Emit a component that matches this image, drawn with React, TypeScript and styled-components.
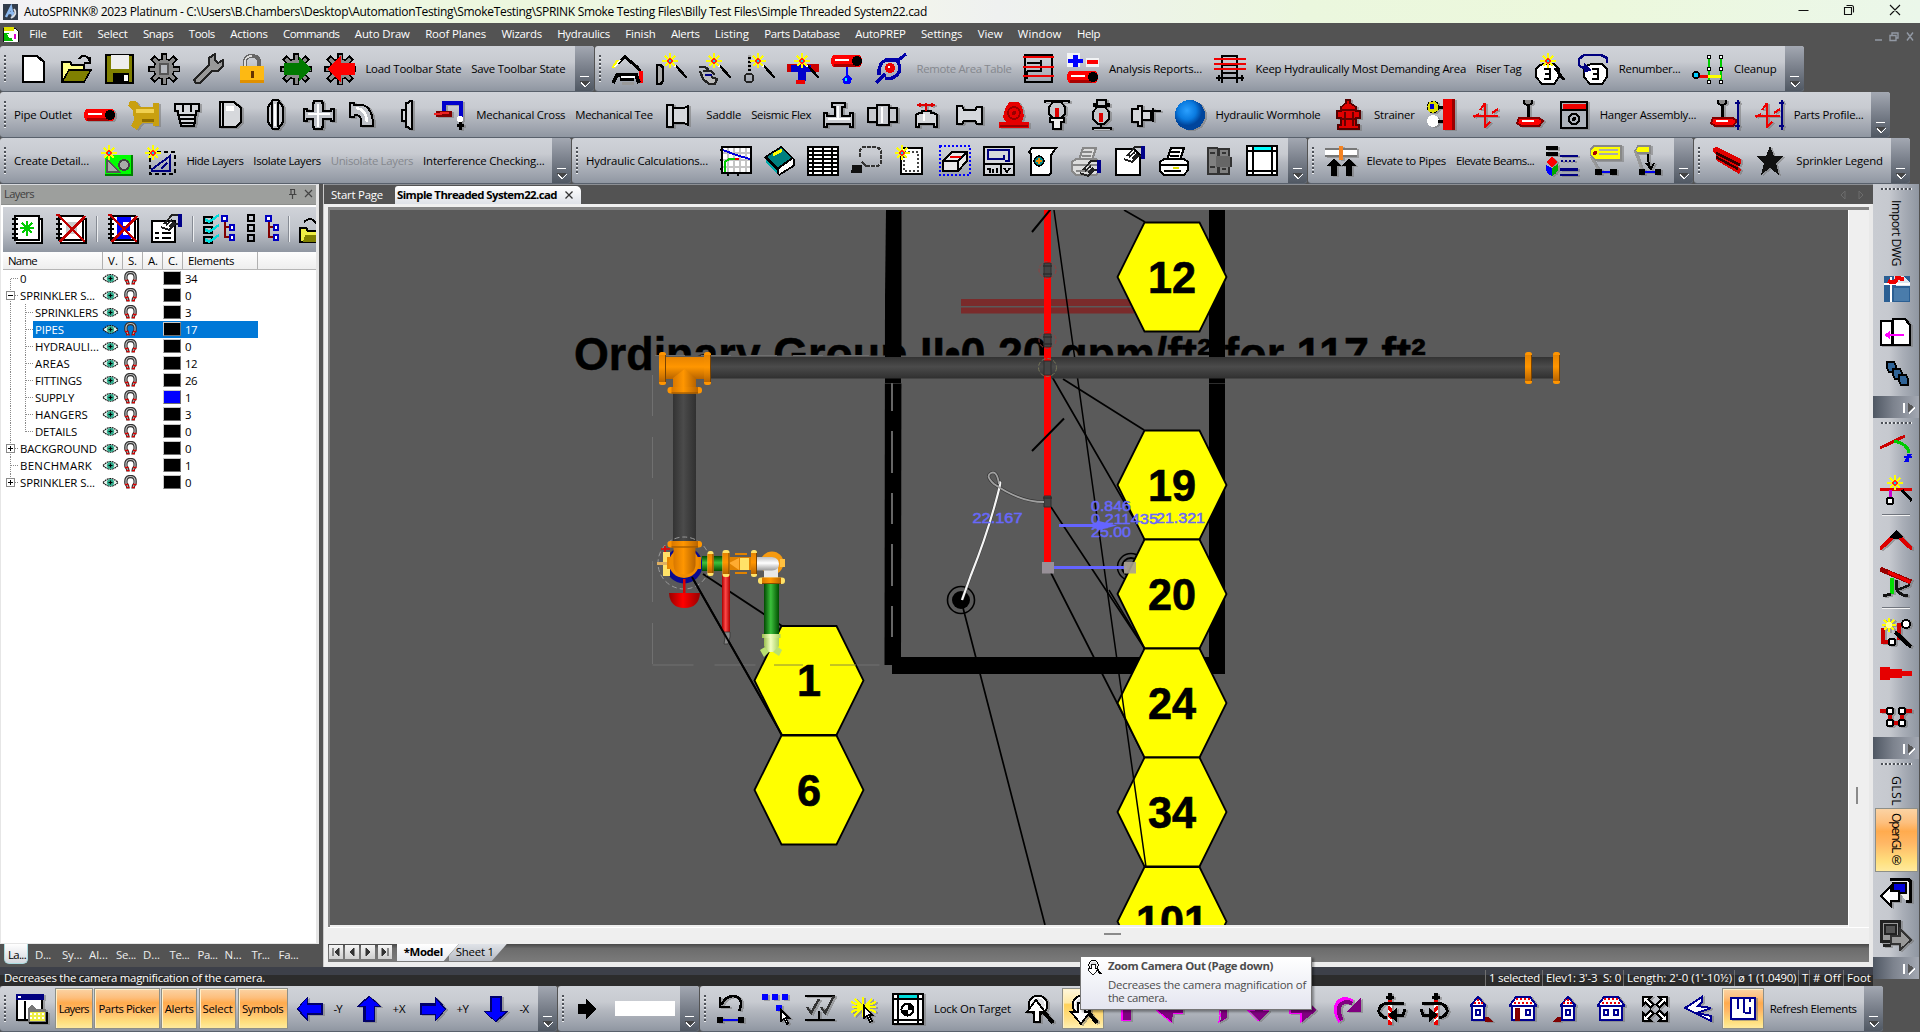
import React, { ReactNode, useLayoutEffect, useRef } from 'react';
import styled, { createGlobalStyle, css } from 'styled-components';

const GlobalStyle = createGlobalStyle`
  * { box-sizing: border-box; }
  body { margin: 0; overflow: hidden; background: #535353; }
  #root { font-family: 'Open Sans', 'Noto Sans', sans-serif; font-size: 11.4px; color: #000; }
`;

/* ---------- text that keeps a set length ---------- */
const Run = styled.span<{ $vertical?: boolean; $bold?: boolean; $color?: string; $size?: number; $w: number }>`
  display: block;
  flex: none;
  white-space: pre;
  line-height: 16px;
  ${p => (p.$vertical ? css`writing-mode: vertical-rl; height: ${p.$w}px;` : css`width: ${p.$w}px;`)}
  ${p => p.$bold && css`font-weight: 700;`}
  ${p => p.$color && css`color: ${p.$color};`}
  ${p => p.$size && css`font-size: ${p.$size}px;`}
`;

type FitProps = { children: string; w: number; vertical?: boolean; bold?: boolean; color?: string; size?: number };
function Fit({ children, w, vertical, bold, color, size }: FitProps) {
  const ref = useRef<HTMLSpanElement>(null);
  useLayoutEffect(() => {
    const el = ref.current;
    if (!el) return;
    el.style.letterSpacing = '0px';
    const box = el.getBoundingClientRect();
    const natural = vertical ? box.height : box.width;
    el.style.letterSpacing = `${(w - natural) / children.length}px`;
  }, [children, w, vertical]);
  return (
    <Run $w={w} $vertical={vertical} $bold={bold} $color={color} $size={size}>
      <span ref={ref}>{children}</span>
    </Run>
  );
}

/* ---------- icons ---------- */
const ln = (d: string, c = '#000', w = 2, f = 'none') => <path d={d} stroke={c} strokeWidth={w} fill={f} />;
const fl = (d: string, c = '#000') => <path d={d} fill={c} />;
const TEETH = [0, 45, 90, 135, 180, 225, 270, 315];
const gear = (
  <>
    {TEETH.map(a => <rect key={a} x="13" y="-0.500" width="6" height="8" fill="#000" transform={`rotate(${a} 16 16)`} />)}
    <circle cx="16" cy="16" r="10.800" fill="#000" />
    <circle cx="16" cy="16" r="9.500" fill="#8a8a8a" />
    {TEETH.map(a => <rect key={a} x="14.500" y="1.500" width="3" height="7" fill="#8a8a8a" transform={`rotate(${a} 16 16)`} />)}
  </>
);
const spark = (x: number, y: number) => (
  <g>
    {ln(`M${x - 8} ${y}h16M${x} ${y - 8}v15M${x - 5} ${y - 5}l10 10M${x + 5} ${y - 5}l-10 10`, '#ff0', 2)}
    <circle cx={x} cy={y} r="2.6" fill="#f22" />
    <rect x={x - 1} y={y - 1} width="2" height="2" fill="#0cf" />
  </g>
);
const wand = (
  <>
    {ln('M20 12L32 25', '#000', 2.4)}
    {ln('M18 11l3 3', '#fff', 1.6)}
    {spark(15, 8)}
  </>
);
const redPipe = (y: number) => (
  <g>
    {fl(`M3 ${y}h24q4 0 4 6t-4 6h-24q-3-2-3-6t3-6z`, '#f00')}
    {fl(`M3 ${y + 9}h22v3h-22z`, '#a00')}
    {fl(`M4 ${y + 4}h14v2h-14z`, '#fff')}
    <circle cx="26" cy={y + 6} r="5" fill="#000" />
  </g>
);
const tag3 = (
  <>
    {ln('M11 11h10l5 5v8l-5 7H9l-6-7v-8l4-4z', '#000', 2, '#fff')}
    {ln('M11 16h6v10h-6M12 21h5', '#000', 2)}
  </>
);
const cube = (x: number, y: number) => ln(`M${x} ${y}h7l2 4v6h-7l-2-4z`, '#000', 1.5, '#2f6396');
const book = (
  <>
    {ln('M5 6h26v24h-26', '#000', 2, '#fff')}
    {ln('M4 3h24v24h-24z', '#000', 2, '#fff')}
    {ln('M1 6h6M1 11h6M1 16h6M1 21h6M1 25h6', '#000', 2)}
  </>
);
const cross = ln('M3 2L30 29M30 3L5 29M1 2h4', '#c00000', 2.8);
const hand = <g>{ln('M13 11l8-9h7M10 14l8 3 6-6h4M15 12l6-5M18 14l5-5', '#222', 1.8)}{fl('M27 1h4v13h-4z', '#008')}</g>;
const tree = (x: number) => (
  <g>
    {ln(`M${x + 3} 6v18h6M${x + 3} 14h6`, '#800000', 2)}
    {ln(`M${x} 3h5v5h-5zM${x + 8} 12h4v5h-4zM${x + 8} 22h4v5h-4z`, '#0000c0', 2, '#fff')}
  </g>
);
const blueArrow = (r: number) => (
  <g transform={`rotate(${r} 16 16)`}>
    {fl('M2.500 16L14 3v7h15v12H14v7z', '#00006a')}
    {fl('M4 15.500L13 5.500v6h14v8H13v6z', '#00f')}
  </g>
);
const purple = (d: string) => <g><g transform="translate(-1 0)">{ln(d, '#f0f', 1.2)}</g>{fl(d, '#800080')}</g>;
const magn = (
  <>
    <circle cx="15" cy="12" r="9.500" fill="#dcdde0" stroke="#000" strokeWidth="2" />
    <circle cx="15" cy="12" r="7.500" fill="none" stroke="#fff" strokeWidth="1.500" />
    {ln('M21 19L30 30', '#000', 4)}
  </>
);
const printer = (dark: string, light: string) => (
  <>
    {ln('M9 15L13 3h13l-4 12z', dark, 2, light)}
    {ln('M13 7h9M12 11h9', dark, 1.5)}
    {ln('M2 17l4-3h20l4 3v8l-4 5H6l-4-4z', dark, 2, light)}
    {ln('M3 20h26M6 26h17', dark, 2)}
  </>
);
const house = (wide: boolean, side: number) =>
  wide ? (
    <>
      {ln('M5 13h22v14H5z', '#000090', 2, '#fff')}
      {ln('M9 4h14l6 8v1H3v-1z', '#000090', 2, '#fff')}
      <path d="M9 6h14M7 10h18" stroke="#e00" strokeWidth="2.400" strokeDasharray="2 2" fill="none" />
      {side ? ln('M9 16h3v11H9z', '#800000', 2, '#900000') : ln('M9 17h4v5H9z', '#000090', 2)}
      {ln('M19 17h4v5h-4z', '#000090', 2)}
    </>
  ) : (
    <g transform={side > 0 ? '' : 'translate(32 0) scale(-1 1)'}>
      {fl('M22 24h4l4 5h-8z', '#800000')}
      {ln('M9 13h12v14H9z', '#000090', 2, '#fff')}
      {ln('M15 4l7 8v1H8v-1z', '#000090', 2, '#fff')}
      <path d="M14 7h4M11 10h9" stroke="#e00" strokeWidth="2" strokeDasharray="2 1.500" fill="none" />
      {ln('M13 17h4v5h-4z', '#000090', 2)}
    </g>
  );
const rot = (flip: boolean) => (
  <g transform={flip ? 'translate(32 0) scale(-1 1)' : ''}>
    {ln('M15 4v28', '#e00', 4)}
    {ln('M13 11l4 3M13 18l4 3M13 25l4 3', '#fff', 2)}
    {ln('M11 4h8', '#000', 3)}
    {fl('M13 0h4v7h-4z')}
    {ln('M29 10H12Q3 12 4 19q2 5 8 6', '#000', 3)}
    {ln('M19 22h9l2-6', '#000', 3)}
    {fl('M22 15v14l-9-7z')}
  </g>
);
const hanger = (
  <>
    {ln('M14 6v12', '#000', 3)}
    {ln('M10 1v3l4 3 4-3V1', '#000', 2, '#888')}
    {ln('M5 19h20l4 3-4 5H7l-4-3z', '#800000', 2, '#f00')}
    {ln('M8 22h12', '#fff', 2)}
  </>
);
const tri = (
  <>{ln('M3 17h25M15 4v25M15 4l-5 7M15 28l5-5M22 14l6-4M4 18l5-3', '#e00', 2)}</>
);
const arrows = (r: number) => (
  <g transform={`rotate(${r} 16 16)`}>{ln('M4 4h8L9.500 6.500l5 5-3 3-5-5L4 12z', '#000', 1.6, '#fff')}</g>
);

const ICONS: Record<string, ReactNode> = {
  doc: ln('M6 3h14l7 6v20H6z', '#000', 2.4, '#fff'),
  open: <>{ln('M2 29V9h8l2 3h12v4', '#000', 2, '#ff8')}{ln('M2 29l7-12h22l-7 12z', '#000', 1.6, '#808000')}{ln('M19 6q4-6 9-1l2 4M30 4v6h-6', '#000', 2)}</>,
  save: <>{ln('M2 2h27v28H2z', '#000', 2, '#808000')}{fl('M7 2h18v14H7z', '#eee')}{fl('M9 20h16v10H9z')}{fl('M20 22h4v6h-4z', '#fff')}</>,
  gear: <>{gear}<rect x="12" y="11" width="8" height="10" fill="#b4b7bd" stroke="#555" strokeWidth="2" /></>,
  wrench: <>{ln('M2 27l15-15V5l6-4v6l3 3 5-3v6l-5 5h-6L8 30H4z', '#222', 2, '#999')}</>,
  lock: <>{ln('M9 15V8q1-5 7-5t7 5v7', '#666', 4)}{ln('M9 15V8q1-5 7-5', '#ddd', 1.6)}{fl('M4 13h24v17H4z', '#fdb913')}{fl('M4 27h24v3H4z', '#e09000')}{fl('M15 18h3v7h-3z', '#630')}</>,
  gearGo: <>{gear}{fl('M4 10h15V3l12 13-12 13v-7H4z', '#007a00')}</>,
  gearBack: <>{gear}{fl('M31 10H17V3L3 16l14 13v-7h14z', '#f00')}</>,
  digger: <>{ln('M6 10L13 4l12 10 3 4', '#000', 3)}{ln('M1 15l5-8', '#ff0', 3)}{ln('M3 14l5-7', '#fff', 1.5)}{fl('M27 18h4v12h-5z', '#f00')}{ln('M1 30l4-8h19l3 8M8 26h14', '#000', 4)}{ln('M9 24h14', '#fff', 2)}{ln('M10 30h12', '#999', 3)}</>,
  wand1: <>{ln('M2 12h4l2 3v13l-2 3H2z', '#000', 2.5, '#aaa')}{wand}</>,
  wand2: <>{ln('M0 14h6l4 3M1 18l3 8 6 5h6l2-5-6-2M4 18h8l4 4', '#222', 2.4, '#bbb')}{ln('M6 22h7', '#008', 2.5)}{wand}</>,
  wand3: <>{ln('M6 2v16', '#000', 3)}<path d="M6 2v16" stroke="#aaa" strokeWidth="3" strokeDasharray="2 2" /><circle cx="6" cy="25" r="4.500" fill="none" stroke="#222" strokeWidth="2" />{wand}</>,
  wand4: <>{fl('M0 11h32v8H0z', '#c00')}{fl('M4 12h20v7h-5v9h-8v-9H4z', '#00c')}{fl('M9 27h9v4H9z', '#e00')}{wand}</>,
  pipeDrop: <>{redPipe(2)}{fl('M15 14h2v8l4 4-2 5h-6l-2-5 4-4z', '#00f')}{fl('M14 25h2v3h-2z', '#0ff')}</>,
  orbit: <>{ln('M1 30l9-9M21 9L31 1M4 22Q3 10 11 7h10l3-1M23 9q4 8-1 13t-12 3', '#00a', 3.2)}<circle cx="15" cy="15" r="5" fill="#e00" /><circle cx="14" cy="14" r="1.500" fill="#fff" /></>,
  table: <>{ln('M2 2h27v27H2zM4 10h14v8H4M18 10V7M4 18v8', '#000', 2.2)}{ln('M0 4h31M0 14h31M0 23h31', '#e00', 2)}</>,
  plusMinus: <>{fl('M0 0h13v14H0zM19 5h13v9H19z', '#f2f3f5')}{fl('M6 2h5v4h5v4h-5v4H6v-4H1V6h5z', '#00f')}{fl('M20 7h11v4H20z', '#f00')}{redPipe(18)}</>,
  most: <>{ln('M8 2v28M23 2v28M8 3h15M8 12h15M8 20h15M2 25h28M5 22v6M28 22v6', '#000', 2.4)}{ln('M0 6h32M0 11h32M0 16h32', '#e00', 2)}</>,
  tagNew: <>{tag3}{ln('M22 15L31 27', '#000', 3)}{spark(15, 8)}</>,
  tagRe: <><g transform="translate(4 0)">{tag3}</g>{ln('M2 13V6l5-4h17l6 3v5M2 13l8 3', '#000080', 2.4)}{fl('M7 10l8 7-8 3z', '#000080')}</>,
  cleanup: <>{ln('M17 5v22M29 5v22', '#0c0', 2.4)}{ln('M5 23h12', '#e00', 3)}{ln('M16 23h13', '#ff0', 3)}<circle cx="4" cy="22" r="3" fill="#0cf" stroke="#000" strokeWidth="1.5" />{[4, 16, 29].map(y => <g key={y}><circle cx="17" cy={y} r="2" fill="#fff" stroke="#000" /><circle cx="29" cy={y} r="2" fill="#fff" stroke="#000" /></g>)}</>,

  outlet: redPipe(10),
  wye: <>{fl('M2 2l6 0 4 6h13V4h6v23h-6v-3H14l-5 7-6-4 3-6-1-9-5-5z', '#c9a010')}{fl('M8 10h18v4H8z', '#f0d050')}{fl('M14 20h12v3H14z', '#8d6c00')}</>,
  bushing: <>{ln('M4 5h24v7h-3v4H7v-4H4zM12 5v8M20 5v8M8 16h16v4H8zM9 20h15v4H9zM10 24h13v3H10z', '#000', 2.2, '#d6d8dc')}</>,
  cap: <>{ln('M5 3h14l7 6v14l-5 5H5zM8 3v25', '#000', 2.2, '#d6d8dc')}{fl('M11 7h8v5h-8z', '#fff')}</>,
  coupling: <>{ln('M14 1h5l5 7v15l-5 7h-5l-5-7V8z', '#000', 2.2, '#c8cacf')}{ln('M13 3v25M19 3v25', '#000', 1.6)}{ln('M16 5v22', '#fff', 2)}</>,
  cross: <>{ln('M11 2h8v2h1v8h8v-2h3v12h-3v-2h-8v8h-1v2h-8v-2h-1v-8H4v2H1V10h3v2h6V4h1z', '#000', 2, '#bfc2c8')}{ln('M15 5v23M5 15h22', '#fff', 2.5)}</>,
  elbow: <>{ln('M3 4h4v2h8q10 2 11 18v3H14v-3q1-8-6-8l-1 2H3z', '#000', 2, '#bfc2c8')}{ln('M9 9q10 1 11 14', '#fff', 2.5)}</>,
  flange: <>{ln('M11 11h4v11h-4zM15 4h2l2-2h2v28h-2l-2-2h-2z', '#000', 2, '#d6d8dc')}</>,
  hose: <>{ln('M10 15V4h17v14', '#00c', 4)}{ln('M2 15h16', '#800000', 6)}{ln('M0 15h8M6 14h9', '#e22', 2)}<circle cx="26" cy="20" r="3" fill="#fff" />{ln('M23 26h7M26 23v8', '#000', 3)}</>,
  reducer: ln('M3 6h6v3h11l4-2v19l-4-2H9v4H3zM9 8v16', '#000', 2.2, '#d6d8dc'),
  tee: <>{ln('M9 4h13v4h-3v9h8v-3h3v14h-3v-3H4v3H1V14h3v3h8V8H9z', '#000', 2, '#c8cacf')}{ln('M15 7v12M5 20h22', '#fff', 2)}</>,
  union: <>{ln('M1 9h9V6h12v3h8v14h-8v3H10v-3H1zM10 6v20M22 6v20', '#000', 2, '#c8cacf')}{ln('M15 8v16', '#fff', 2)}</>,
  valveR: <>{ln('M5 16l3-2h3v-2h9v2h3l3 2v12h-3v-3H8v3H5z', '#000', 2, '#d6d8dc')}{ln('M6 6h18M15 4v8M9 4v4M21 4v4', '#d00', 2)}{ln('M13 15v7', '#fff', 2)}</>,
  nipple: ln('M3 7h5l2 4h11l2-3h5v17h-5l-2-3H10l-2 3H3z', '#000', 2, '#d6d8dc'),
  alarm: <>{fl('M7 10l4-7h10l3 5 2 9-2 6h7v6H1v-6h7l-3-5z', '#e60000')}<circle cx="16" cy="14" r="6" fill="none" stroke="#900" strokeWidth="1.6" /><circle cx="16" cy="14" r="2" fill="#900" />{fl('M2 26h28v2H2z', '#900')}</>,
  upright: <>{ln('M3 4V2h24v2M11 3l-4 5v7l5 5h6l5-5V8l-4-5z', '#000', 2, '#c4c7cc')}{fl('M13 9h4v9h-4z', '#d00')}{ln('M8 19h14v4h-3v7h-8v-7H8z', '#000', 2, '#eee')}</>,
  pendent: <>{ln('M8 7V5h3V1h9v4h3v2zM11 8l-4 5v7l5 5h6l5-5v-7l-4-5zM15 26v4M7 31v-2h18v2', '#000', 2, '#c4c7cc')}{fl('M13 14h4v9h-4z', '#d00')}</>,
  sidewall: ln('M2 10h6V7h4v20H8v-4H2zM12 12h9v9h-9M21 13h3M23 9v14M24 12h7', '#000', 2, '#d6d8dc'),
  ball: <><defs><radialGradient id="ballG" cx=".4" cy=".35"><stop offset="0" stopColor="#2ba0ff" /><stop offset=".6" stopColor="#0a7be0" /><stop offset="1" stopColor="#00459c" /></radialGradient></defs><circle cx="16" cy="16" r="15" fill="url(#ballG)" /></>,
  hydrant: <>{ln('M14 1h4v3l6 4v4h4v7h-4v7h3v4H6v-4h3v-7H5v-7h4V8l5-4z', '#500', 1.5, '#e00000')}{ln('M8 11h17M9 20h14M13 13v14M21 13v14', '#600', 2)}</>,
  meter: <>{fl('M17 0h11v31H17z', '#e00')}{fl('M26 0h3v31h-3z', '#900')}<circle cx="7" cy="8" r="6" fill="#dd0" stroke="#000" strokeDasharray="3 2" />{fl('M4 5h4v5H4z', '#00c')}<circle cx="7" cy="22" r="6" fill="#fff" />{ln('M12 8h5M12 22h5', '#000', 3)}</>,
  tri,
  hanger,
  target: <>{ln('M3 3h26v26H3z', '#000', 2.6, '#aeb3bb')}{fl('M5 5h23v5H5z', '#e00')}{ln('M3 11h26', '#000', 2)}<circle cx="16" cy="20" r="5" fill="none" stroke="#000" strokeWidth="2.4" /><circle cx="16" cy="20" r="2" /></>,
  hangerH: <>{hanger}{ln('M30 1v30M27 4h5M27 27h5', '#000080', 2)}</>,
  triH: <>{tri}{ln('M30 1v30M27 4h5M27 27h5', '#000080', 2)}</>,

  detail: <>{fl('M4 10h28v21H4z', '#008000')}{fl('M4 10h26v19H4z', '#0f0')}{ln('M6 14v13h12L6 14', '#555', 1.6, '#aaa')}<circle cx="23" cy="20" r="5" fill="#aaa" stroke="#444" strokeWidth="2" />{spark(8, 8)}</>,
  dashTri: <><rect x="5" y="7" width="25" height="22" fill="none" stroke="#000" strokeWidth="2.5" strokeDasharray="4 3" />{ln('M6 25L25 11v15H6M16 24l6-6', '#000080', 2)}{spark(8, 8)}</>,
  graph: <>{ln('M2 2h29v26H2z', '#000', 2.2, '#fff')}{ln('M8 3v24M14 3v24M20 3v24M26 3v24M3 8h27M3 15h27M3 22h27', '#c4c4c4', 2)}{ln('M3 5l13 5 14 4', '#00d', 2)}{ln('M5 27V17l4-3h7', '#0c0', 2)}{ln('M15 14h4', '#e00', 2)}{ln('M0 5h3M0 15h3M0 24h3M8 28v3M18 28v3', '#000', 2)}</>,
  book: <>{fl('M0 12L17 1l14 13v7L15 31z', '#000')}{fl('M3 12l14-9 10 10-13 9z', '#008080')}{fl('M2 15l11 11v3L2 18z', '#0aa')}{fl('M15 24l14-10v6L15 29z', '#fff')}{ln('M9 10l9-5', '#ff0', 3)}</>,
  sheet: <>{ln('M1 2h30v28H1z', '#000', 2, '#fff')}{ln('M1 6h30M1 10h30M1 14h30M1 18h30M1 22h30M1 26h30M6 2v28M16 2v28M25 2v28', '#000', 1.6)}</>,
  lasso: <>{ln('M9 13V5l3-3h14l4 3v13l-3 3H15l-4-4', '#333', 2.2)}<path d="M9 13V5l3-3h14l4 3v13l-3 3H15" stroke="#c4c7cc" strokeWidth="2.4" fill="none" strokeDasharray="1.500 3.500" />{ln('M0 27l11-6M2 21h7v5H2z', '#111', 3, '#888')}</>,
  dashDoc: <>{ln('M8 3h19v26H6V8', '#000', 2, '#fff')}<rect x="9" y="7" width="14" height="19" fill="none" stroke="#444" strokeWidth="2" strokeDasharray="2 2" />{spark(7, 8)}</>,
  box: <><rect x="1" y="1" width="30" height="29" fill="none" stroke="#00f" strokeWidth="2" strokeDasharray="2 2" />{ln('M4 16l9-9h15v9l-9 10H4z', '#000', 2, '#e8e8e8')}{ln('M4 16h15l9-9M19 16v10', '#000', 2)}{ln('M11 12h11', '#e00', 2.5)}</>,
  plan: <>{ln('M1 2h30v28H1zM1 19h30M18 19v11', '#000', 2.2, '#d6d8dc')}{ln('M21 10v4H5V5h21v11h-4', '#000080', 2.2)}{ln('M4 24h3v4M10 24v4M14 23v5M21 23l3 4 3-4', '#000', 1.8)}</>,
  scroll: <>{ln('M5 3h24l-5 7v18l-2 2H4V9L2 7z', '#000', 2, '#fff')}<circle cx="12" cy="16" r="5" fill="#088" stroke="#000" strokeWidth="1.4" />{ln('M12 13v6M9 16h6', '#e80', 1.6)}</>,
  printG: <>{printer('#888', '#ddd')}<g transform="translate(0 14)">{hand}</g></>,
  docHand: <>{ln('M2 4h18l6 6v20H2z', '#000', 2, '#fff')}{hand}</>,
  print: <>{printer('#000', '#fff')}{fl('M15 22h6v2h-6z', '#dd0')}</>,
  bldg: <>{fl('M5 2h11v1h12v9h2v10h-2v8H5z', '#333')}{fl('M7 4h8v24H7zM18 5h8v23h-8z', '#808080')}{ln('M8 8h5M8 22h5M20 8h4M20 24h4', '#333', 2)}{fl('M14 11h14v11H14z', '#666')}</>,
  frame: <>{ln('M1 1h30v29H1z', '#000', 2.2, '#fff')}{ln('M7 1v29M26 1v29M1 6h30M1 26h30', '#000', 2)}{fl('M8 2h17v3H8z', '#0ff')}</>,
  elevate: <>{fl('M0 3h32v2H0zM0 10h32v2H0z', '#777')}{fl('M0 5h32v5H0z', '#fff')}{fl('M14 1h4v14h-4z', '#f58220')}{fl('M2 21l7-8 7 8h-4v10H6V21zM17 21l7-8 7 8h-4v10h-6V21z')}</>,
  palette: <>{fl('M0 1h12v4H0zM0 7h12v4H0z')}{fl('M6 12l6 5-6 5-6-5z', '#f00')}{fl('M0 20l6 3v8q-6-3-6-7z', '#00f')}{fl('M12 19l-6 4v8q6-3 6-8z', '#0a0')}{fl('M14 10h18v2H14zM14 23h18v3H14zM14 29h18v2H14z', '#000080')}<path d="M15 16h16" stroke="#000080" strokeWidth="2" strokeDasharray="2 2" /></>,
  tagY: <>{ln('M4 1h27v14H6L0 10V5z', '#888', 1.6, '#ff0')}{ln('M9 5h19M9 9h19', '#aaa', 2)}<circle cx="5" cy="8" r="2" fill="#a00" />{ln('M1 12l8 14', '#999', 2)}{ln('M9 27h14', '#00e', 2)}{fl('M5 24h7v6H5zM20 24h7v6h-7z')}</>,
  tagA: <>{ln('M4 1h12v7H4L1 6z', '#888', 1.5, '#ff0')}{ln('M1 6l7 20', '#999', 2)}{ln('M14 9v6l2 8M12 18l5 6 3-6', '#000', 2)}{ln('M9 27h14', '#00e', 2)}{fl('M5 24h6v6H5zM21 24h6v6h-6z')}</>,
  beam: <>{fl('M2 3l4-1 24 12v4l-3 3 3 4-2 4L5 15V9L2 7z', '#e00000')}{ln('M5 8l24 12M5 12l22 12', '#300', 2.4)}</>,
  star: fl('M16 1l4 10h10l-8 7 3 12-9-7-9 7 3-12-8-7h10z', '#111'),

  win: <>{ln('M1 4h25v23H1z', '#000', 2.2, '#fff')}{fl('M0 1h28v6H0z', '#000080')}{fl('M2 3h3v2H2z', '#fff')}{ln('M9 8v20', '#000', 2)}{fl('M12 16l4-5 4 5h10v14H12z', '#777')}{fl('M14 19h15v9H14z', '#ee4')}<path d="M14 21h15M14 25h15" stroke="#fff" strokeWidth="2" strokeDasharray="2 2" />{ln('M31 19v11H13', '#000', 1.6)}</>,
  left: blueArrow(0), up: blueArrow(90), right: blueArrow(180), down: blueArrow(270),
  go: fl('M7 11h8V6l10 10-10 10v-5H7z'),
  undo: <>{ln('M4 4v10h10M5 12Q12 0 21 4q7 4 2 14', '#000', 2.6)}{ln('M6 27h20', '#00e', 2.6)}{fl('M1 24h6v6H1zM22 24h6v6h-6z')}</>,
  pick: <>{fl('M2 1h6v6H2zM12 1h6v6h-6zM22 1h6v6h-6zM16 12h6v6h-6z', '#00f')}{ln('M21 17v11l3-2 3 5 1-1-2-5h3z', '#000', 1.6, '#fff')}</>,
  checks: <>{ln('M1 3h30M1 27h30M15 18v9', '#000', 2.2)}{ln('M3 14l4 6 8-14M17 14l4 6 9-17', '#333', 2.4)}</>,
  burst: <>{ln('M4 14h24M15 4v20M7 6l17 17M24 6L6 23M3 9l25 10M28 9L3 19', '#ff0', 2.2)}{ln('M16 13v12l3-2 3 6 2-1-3-6h3z', '#000', 1.6, '#fff')}</>,
  lockT: <>{ln('M1 1h30v30H1z', '#000', 2.4, '#fff')}{ln('M6 1v30M26 1v30M1 6h30M1 27h30', '#000', 1.6)}{fl('M7 2h18v3H7z', '#0dd')}<circle cx="15.500" cy="16.500" r="6" fill="#fff" stroke="#000" strokeWidth="2" />{fl('M15.500 10v6.500h6q0-6-6-6.500zM15.500 23v-6.500h-6q0 6 6 6.500z')}</>,
  zoomIn: <>{magn}{ln('M11 29V19H4l9-12 9 12h-5v10z', '#000', 1.8, '#fff')}</>,
  zoomOut: <>{magn}{ln('M11 10v9H4l10 12 9-12h-5v-9z', '#000', 1.8, '#fff')}</>,
  pUp: purple('M12 27V12H5L16 2l11 10h-7v15z'),
  pLeft: purple('M2 17L16 5v7h12v8H18l-1 9z'),
  pCurl: purple('M10 5h10q10 4 8 20l-7 4q4-14-6-16h-5z'),
  pDown: purple('M12 3v15H6l10 10 10-10h-6V3z'),
  pRight: purple('M30 17L17 5v7H4v8h11v9z'),
  pRedo: <>{ln('M10 28Q3 17 8 9.500q6-5 13 0', '#f0f', 6)}{ln('M11 27Q5 17 10 11q6-4 11 0', '#800080', 4)}{fl('M30 4v15H15z', '#800080')}</>,
  rotL: rot(false), rotR: rot(true),
  h1: house(false, 1), h2: house(true, 1), h3: house(false, -1), h4: house(true, 0),
  expand: <>{arrows(0)}{arrows(90)}{arrows(180)}{arrows(270)}</>,
  plane: ln('M2 15L19 4v5l-4 4 13 2-14 5 14 3v5z', '#000090', 2, '#fff'),
  floor: ln('M4 5h24v21H4zM11 5v11M17 5v15M23 5v4M23 14v6h-5', '#000090', 2.6, '#fff'),

  dwg: <>{fl('M4 3h26v26H4z', '#2b5f93')}{fl('M14 3h10l6 7v3H16z', '#dde6ee')}{ln('M11 4v25M4 11h26', '#fff', 2)}{ln('M8 8q8 4 9-3l7 1', '#e00', 4)}{fl('M14 15h15v13H14z', '#4a7cab')}</>,
  docs: <>{ln('M1 5h11v24H1zM13 3h12l5 6v20H13z', '#000', 2.2, '#fff')}{ln('M6 19h18', '#f0f', 2.4)}{fl('M4 19l6-4v8z', '#f0f')}</>,
  cubes: <>{cube(7, 5)}{cube(13, 12)}{cube(19, 18)}</>,
  v1: <>{ln('M0 16L25 4', '#c00', 3)}{ln('M14 9q14 3 15 12', '#0c0', 3)}{ln('M24 25h8M28 22v8M25 30l6-8', '#00e', 2.2)}</>,
  v2: <>{fl('M0 15h32v3H0z', '#d00')}{ln('M10 17v9', '#c0c', 3)}<circle cx="10" cy="28" r="3.500" fill="#fff" stroke="#000" strokeWidth="2" />{ln('M22 17l10 11', '#000', 3)}{spark(15, 10)}</>,
  v3: <>{ln('M0 25L16 10l16 15', '#d00', 4)}{fl('M9 13l7-7 7 7-5 2h-4z')}</>,
  v4: <>{ln('M0 2l31 13', '#900', 5)}{ln('M8 5l22 10', '#e00', 3)}{ln('M12 11v16', '#0d0', 4)}{ln('M16 13v8M3 29l8-2M16 21q4 8 12 8', '#111', 3)}{ln('M17 23l13-5', '#111', 2.4)}</>,
  v5: <>{ln('M3 12v14h8M19 24V9h7', '#c00', 4)}{ln('M15 16l16 15', '#000', 4)}<circle cx="26" cy="8" r="4" fill="#fff" stroke="#000" strokeWidth="2" /><circle cx="12" cy="26" r="3.500" fill="#fff" stroke="#000" strokeWidth="2" />{ln('M2 9h14M9 2v14M4 4l10 10M14 4L4 14', '#ff0', 2)}<circle cx="9" cy="9" r="3" fill="#ff9" /></>,
  v6: fl('M0 10h10v2h12v2h10v5H22v2H10v2H0z', '#e60000'),
  v7: <>{ln('M0 10h10M22 10h10M10 12v9M22 12v9M12 22h8', '#c00', 3.5)}{[[10, 10], [22, 10], [10, 22], [22, 22]].map(([x, y]) => <circle key={`${x}-${y}`} cx={x} cy={y} r="3.500" fill="#fff" stroke="#000" strokeWidth="2" />)}</>,
  scrBack: <>{ln('M10 2h18l2 2v20h-4', '#000', 3, '#eee')}{ln('M13 6h13v10H13z', '#000', 2, '#00d')}{ln('M1 19L11 9v5h8v10h-8v5z', '#000', 1.8, '#fff')}</>,
  scrGo: <>{ln('M1 2h18v20H1z', '#222', 3, '#999')}{ln('M5 6h11v9H5z', '#222', 2, '#555')}{ln('M31 21L20 10v7h-9v8h9v6z', '#333', 1.8, '#999')}{ln('M3 26h8', '#222', 3)}</>,

  lyNew: <>{book}{ln('M16 8v15M9 15h14M11 10l10 10M21 10L11 20', '#0c0', 2)}</>,
  lyDel: <>{book}{fl('M11 9h11v12H11z', '#ccc')}{cross}</>,
  lyEdit: <>{book}{fl('M10 4h14v5h-8v4h7v5h-7v4h8v4H10z', '#00f')}{cross}</>,
  lyProp: <>{ln('M1 8h23v21H1z', '#000', 2, '#fff')}{ln('M4 20h4M11 20h9M4 25h4M11 25h9', '#000', 2)}{hand}</>,
  lyChecks: <>{ln('M1 4h8v6H1zM1 14h8v6H1zM1 24h8v6H1z', '#000', 2)}{ln('M2 6l4 3 10-7M2 16l4 3 10-7M2 26l4 3 10-7', '#0dd', 2.4)}{tree(19)}</>,
  lyTree: <>{ln('M1 2h6v6H1zM1 12h6v6H1zM1 22h6v6H1z', '#000', 2)}{tree(19)}</>,
  lyOpen: <>{ln('M5 9q8-7 12 2', '#000', 2)}{ln('M1 29V15h6l2 3h12v11z', '#000', 2, '#ee4')}{fl('M6 22h16v7H4z', '#808000')}</>,
};

const Svg = styled.svg<{ $shadow?: boolean; $size?: number }>`
  display: block;
  flex: none;
  width: ${p => p.$size ?? 32}px;
  height: ${p => p.$size ?? 32}px;
  overflow: hidden;
  ${p => p.$shadow && css`filter: drop-shadow(2px 1px 0 rgba(120, 120, 120, 0.55));`}
`;
const Icon = ({ name, shadow, size }: { name: string; shadow?: boolean; size?: number }) => (
  <Svg viewBox="0 0 32 32" $shadow={shadow} $size={size} shapeRendering="crispEdges">{ICONS[name]}</Svg>
);

/* ---------- toolbars ---------- */
type Item =
  | { k: 'i'; n: string }
  | { k: 't'; s: string; w: number; dim?: boolean }
  | { k: 'b'; s: string; w: number; f: number }
  | { k: 'on'; n: string; hover?: boolean }
  | { k: 'field' };
const ic = (...names: string[]): Item[] => names.map(n => ({ k: 'i', n }));
const tx = (s: string, w: number, dim?: boolean): Item => ({ k: 't', s, w, dim });
const bt = (s: string, w: number, f: number): Item => ({ k: 'b', s, w, f });

const ToolRow = styled.div`
  display: flex;
  gap: 1px;
  height: 46px;
  background: #535353;
`;
const Bar = styled.div<{ $w: number }>`
  display: flex;
  align-items: center;
  width: ${p => p.$w}px;
  height: 45px;
  border-radius: 3px;
  overflow: hidden;
  box-shadow: 0 1px 0 #59616c;
  background: linear-gradient(#d0d3d9, #c8cbd1 35%, #b3b7bf 55%, #9ca2ac 85%, #8f96a1);
`;
const Grip = styled.div`
  flex: none;
  width: 2px;
  height: 27px;
  margin: 0 -1px 0 4px;
  background: repeating-linear-gradient(#4d5158 0 2px, #eceef0 2px 3px, transparent 3px 4px);
`;
const Slot = styled.div<{ $gap: number }>`
  flex: none;
  margin-left: ${p => p.$gap}px;
`;
const hot = 'linear-gradient(#fbd3a4, #fdbf7d 22%, #ffab4e 36%, #ffb765 55%, #ffe07f 85%, #ffea9e)';
const HotButton = styled.div<{ $w: number; $hover?: boolean }>`
  display: flex;
  flex: none;
  align-items: center;
  justify-content: center;
  width: ${p => p.$w}px;
  height: 41px;
  border: 1px solid #eadfb8;
  outline: 1px solid #8d8f88;
  outline-offset: -1px;
  box-shadow: inset 1px 1px #fff0c8;
  background: ${p => (p.$hover ? 'linear-gradient(#fff7dc, #ffe9a6 35%, #ffd15a 40%, #ffe28c 80%, #fff0b0)' : hot)};
`;
const Field = styled.div`
  width: 60px;
  height: 15px;
  background: #fff;
`;
const Cap = styled.div`
  flex: none;
  align-self: stretch;
  width: 19px;
  margin-left: auto;
  display: flex;
  align-items: flex-end;
  justify-content: center;
  padding: 0 0 3px 1px;
  background: linear-gradient(#a3a8b2, #7d838e 45%, #505863);
`;
const CapMark = () => (
  <svg width="12" height="13" viewBox="0 0 12 13" shapeRendering="crispEdges">
    <path d="M1 1.500h9" stroke="#fff" strokeWidth="1.500" />
    <path d="M1 6h9l-4.500 5z" fill="#444" />
    <path d="M2 7l4 5 5-5" stroke="#fff" strokeWidth="1.300" fill="none" />
  </svg>
);

/* spacing between neighbours depends on what kind of item comes before */
function gapBefore(item: Item, prev: Item | undefined, lead?: number) {
  const tight = lead !== undefined;
  if (!prev) return lead ?? (item.k === 't' ? 9 : 11.6);
  if (item.k === 't') return prev.k === 'on' ? 6 : prev.k === 'i' && tight && item.w < 20 ? 8 : 9.9;
  if (item.k === 'b') return prev.k === 'b' ? 1.2 : 7;
  if (item.k === 'on') return 7;
  if (prev.k === 'on') return 6.8;
  if (prev.k === 'b') return 6;
  if (prev.k === 't') return tight ? (prev.w > 20 ? 12 : 11) : 11.7;
  return tight ? 12 : 11.85;
}

function Toolbar({ items, w, shadow, lead }: { items: Item[]; w: number; shadow?: boolean; lead?: number }) {
  return (
    <Bar $w={w}>
      <Grip />
      {items.map((it, i) => (
        <Slot key={i} $gap={gapBefore(it, items[i - 1], lead)}>
          {it.k === 'i' && <Icon name={it.n} shadow={shadow} />}
          {it.k === 't' && <Fit w={it.w} color={it.dim ? '#85888e' : undefined}>{it.s}</Fit>}
          {it.k === 'b' && <HotButton $w={it.w}><Fit w={it.f}>{it.s}</Fit></HotButton>}
          {it.k === 'on' && <HotButton $w={42} $hover={it.hover}><Icon name={it.n} shadow /></HotButton>}
          {it.k === 'field' && <Field />}
        </Slot>
      ))}
      <Cap><CapMark /></Cap>
    </Bar>
  );
}

/* ---------- window chrome ---------- */
const Window = styled.div`
  display: flex;
  flex-direction: column;
  width: 1920px;
  height: 1032px;
  overflow: hidden;
  background: #535353;
`;
const TitleBar = styled.div`
  display: flex;
  align-items: center;
  height: 23px;
  padding: 0 0 0 3px;
  background: linear-gradient(90deg, #f3f1f6, #eff7e6 14%, #ecf7de 27%, #f3f6ea 45%, #eff1f0 52%, #ebf7de 68%, #ecf8dc 83%, #ebf7ea);
`;
const Caption = styled.div`
  flex: 1;
  margin-left: 6px;
`;
const WinButtons = styled.svg`
  width: 130px;
  height: 23px;
`;
const MenuBar = styled.div`
  display: flex;
  align-items: center;
  gap: 15.350px;
  height: 23px;
  padding-left: 3px;
  padding-bottom: 1px;
  color: #fff;
`;
const MenuIcon = styled.svg`
  width: 16px;
  height: 16px;
  margin-right: -5px;
`;
const MdiButtons = styled.svg`
  width: 50px;
  height: 20px;
  margin: 3px 0 0 auto;
`;
const Middle = styled.div`
  display: flex;
  height: 802px;
`;
const Work = styled.div`
  display: flex;
  flex-direction: column;
  width: 1873px;
`;
const WorkTop = styled.div`
  display: flex;
  height: 783px;
`;

/* ---------- layers panel ---------- */
const SideColumn = styled.div`
  width: 323px;
  flex: none;
`;
const Panel = styled.div`
  width: 319px;
  height: 760px;
  border: 1px solid #e6e6e6;
  border-right-width: 3px;
  border-top-color: #d8dade;
  background: #fff;
`;
const PanelTitle = styled.div`
  display: flex;
  align-items: center;
  justify-content: space-between;
  height: 20px;
  padding: 0 2px 2px 3px;
  color: #404040;
  background: #9d9f9d;
  border-bottom: 1px solid #8d8f8d;
`;
const PanelTools = styled.div`
  display: flex;
  align-items: center;
  height: 45px;
  margin: 2px 0 0 2px;
  padding: 0 0 1px 8px;
  overflow: hidden;
  background: linear-gradient(#d0d3d9, #c0c4cb 50%, #8f96a1);
`;
const ToolSlot = styled.div<{ $w: number }>`
  flex: none;
  width: ${p => p.$w}px;
`;
const Divider = styled.div`
  flex: none;
  width: 2px;
  height: 26px;
  background: linear-gradient(90deg, #868b94 50%, #eceef0 50%);
`;
const HeadRow = styled.div`
  display: grid;
  grid-template-columns: 100px 20px 20px 20px 20px 75px 1fr;
  height: 18px;
  margin-left: 2px;
  background: linear-gradient(#fdfdfd, #eeeeee);
  border-bottom: 1px solid #b5b5b5;
`;
const HeadCell = styled.div<{ $pad: number }>`
  padding: 1px 0 0 ${p => p.$pad}px;
  border-right: 1px solid #b0b0b0;
  &:last-child { border-right: 0; }
`;
const LayerRow = styled.div<{ $sub: boolean; $on?: boolean }>`
  display: grid;
  grid-template-columns: ${p => (p.$sub ? '32px 67px' : '17px 82px')} 21px 40px 22px 73px;
  align-items: center;
  height: 17px;
  margin-left: 2px;
  width: 255px;
  color: ${p => (p.$on ? '#fff' : '#000')};
  background: ${p => (p.$on ? 'linear-gradient(90deg, #fff 30px, #0078d7 30px)' : 'transparent')};
`;
const Swatch = styled.div<{ $c: string }>`
  width: 18px;
  height: 14px;
  margin-top: -1px;
  border: 1px solid #c9c9c9;
  border-right-color: #707070;
  border-bottom-color: #707070;
  background: ${p => p.$c};
`;
const Branch = styled.svg`
  display: block;
  width: 100%;
  height: 17px;
`;

type Layer = { name: string; w: number; n: string; sub?: boolean; box?: '+' | '-'; c?: string; on?: boolean; last?: boolean };
const LAYERS: Layer[] = [
  { name: '0', w: 6, n: '34' },
  { name: 'SPRINKLER S...', w: 75, n: '0', box: '-' },
  { name: 'SPRINKLERS', w: 63, n: '3', sub: true },
  { name: 'PIPES', w: 29, n: '17', sub: true, on: true },
  { name: 'HYDRAULI...', w: 64, n: '0', sub: true },
  { name: 'AREAS', w: 35, n: '12', sub: true },
  { name: 'FITTINGS', w: 47, n: '26', sub: true },
  { name: 'SUPPLY', w: 39, n: '1', sub: true, c: '#0000ff' },
  { name: 'HANGERS', w: 53, n: '3', sub: true },
  { name: 'DETAILS', w: 42, n: '0', sub: true, last: true },
  { name: 'BACKGROUND', w: 77, n: '0', box: '+' },
  { name: 'BENCHMARK', w: 72, n: '1' },
  { name: 'SPRINKLER S...', w: 75, n: '0', box: '+', last: true },
];

function Lines({ l, first }: { l: Layer; first: boolean }) {
  const dash = { stroke: '#8a8a8a', strokeDasharray: '1 1', fill: 'none' };
  return (
    <Branch shapeRendering="crispEdges">
      <path d={first ? 'M7.500 9v8' : l.last && l.box ? 'M7.500 0v9' : 'M7.500 0v17'} {...dash} />
      {l.sub && <path d={`M22.500 0v${l.last ? 9 : 17}M22.500 8.500h8`} {...dash} />}
      {!l.sub && <path d="M7.500 8.500h7" {...dash} />}
      {l.box && (
        <>
          <rect x="3.500" y="4.500" width="8" height="8" fill="#fff" stroke="#8a8a8a" />
          <path d={l.box === '+' ? 'M5 8.500h5M7.500 6v5' : 'M5 8.500h5'} stroke="#000" />
        </>
      )}
    </Branch>
  );
}
const Eye = () => (
  <svg width="18" height="14" viewBox="0 0 18 14">
    <path d="M1 6.500Q8.500-1.500 16 6.500Q8.500 14 1 6.500z" fill="#e8f4ee" stroke="#111" strokeWidth="1.200" strokeDasharray="1.800 .7" />
    <circle cx="8.500" cy="6.500" r="3.600" fill="#2fae8e" />
    <path d="M8.500 4.500v4M6.500 6.500h4" stroke="#000" strokeWidth="1.200" />
  </svg>
);
const Magnet = () => (
  <svg width="15" height="15" viewBox="0 0 15 15">
    <path d="M5 13.500q0-3-2-5q-1-7 4.500-7t4.500 7q-2 2-2 5" fill="none" stroke="#333" strokeWidth="3.400" />
    <path d="M5 13.500q0-3-2-5q-1-7 4.500-7t4.500 7q-2 2-2 5" fill="none" stroke="#c4c4c4" strokeWidth="1.200" />
    <path d="M2 9.500h3.500M3.500 12.500h3M10 9.500h3.500M9 12.500h3" stroke="#d00" strokeWidth="1.300" />
  </svg>
);
const SideTabs = styled.div`
  display: flex;
  align-items: flex-start;
  height: 23px;
  padding-left: 4px;
  color: #eee;
`;
const SideTab = styled.div<{ $w: number; $on?: boolean }>`
  width: ${p => p.$w}px;
  height: 20px;
  padding: 3px 0 0 4px;
  ${p => p.$on && css`
    color: #000;
    padding-left: 3px;
    margin-right: 3px;
    border-radius: 0 0 5px 5px;
    border: 1px solid #aadbe0;
    border-top: 0;
    background: linear-gradient(#fff, #d5d8de);
  `}
`;
const SIDE_TABS: [string, number, number][] = [
  ['D...', 16, 27], ['Sy...', 20, 27], ['Al...', 19, 27], ['Se...', 20, 27], ['D...', 17, 26.5],
  ['Te...', 20, 28], ['Pa...', 20, 27], ['N...', 17, 27], ['Tr...', 18, 27], ['Fa...', 20, 26],
];

function LayersPanel() {
  return (
    <SideColumn>
      <Panel>
        <PanelTitle>
          <Fit w={30} size={11.2}>Layers</Fit>
          <svg width="27" height="14" viewBox="0 0 27 14" fill="none" stroke="#444" strokeWidth="1.200">
            <path d="M3 2.500h5M4 2.500v5M7.500 2.500v5M2 7.500h7.500M5.500 8v4" />
            <path d="M18 3l7 7M25 3l-7 7" />
          </svg>
        </PanelTitle>
        <PanelTools>
          <ToolSlot $w={44}><Icon name="lyNew" /></ToolSlot>
          <ToolSlot $w={41}><Icon name="lyDel" /></ToolSlot>
          <Divider />
          <ToolSlot $w={9} />
          <ToolSlot $w={44}><Icon name="lyEdit" /></ToolSlot>
          <ToolSlot $w={41}><Icon name="lyProp" /></ToolSlot>
          <Divider />
          <ToolSlot $w={9} />
          <ToolSlot $w={44}><Icon name="lyChecks" /></ToolSlot>
          <ToolSlot $w={41}><Icon name="lyTree" /></ToolSlot>
          <Divider />
          <ToolSlot $w={9} />
          <Icon name="lyOpen" />
        </PanelTools>
        <HeadRow>
          <HeadCell $pad={5}><Fit w={29}>Name</Fit></HeadCell>
          <HeadCell $pad={5}><Fit w={10}>V.</Fit></HeadCell>
          <HeadCell $pad={5}><Fit w={9}>S.</Fit></HeadCell>
          <HeadCell $pad={5}><Fit w={10}>A.</Fit></HeadCell>
          <HeadCell $pad={5}><Fit w={10}>C.</Fit></HeadCell>
          <HeadCell $pad={5}><Fit w={46}>Elements</Fit></HeadCell>
          <HeadCell $pad={0} />
        </HeadRow>
        {LAYERS.map((l, i) => (
          <LayerRow key={i} $sub={!!l.sub} $on={l.on}>
            <Lines l={l} first={i === 0} />
            <Fit w={l.w}>{l.name}</Fit>
            <Eye />
            <Magnet />
            <Swatch $c={l.c ?? '#000'} />
            <Fit w={l.n.length * 6}>{l.n}</Fit>
          </LayerRow>
        ))}
      </Panel>
      <SideTabs>
        <SideTab $w={24} $on><Fit w={18}>La...</Fit></SideTab>
        {SIDE_TABS.map(([s, f, w], i) => <SideTab key={i} $w={w}><Fit w={f}>{s}</Fit></SideTab>)}
      </SideTabs>
    </SideColumn>
  );
}

/* ---------- document ---------- */
const Doc = styled.div`
  flex: 1;
  display: flex;
  flex-direction: column;
  border-left: 1px solid #c9c9c9;
`;
const DocTabs = styled.div`
  display: flex;
  align-items: flex-end;
  height: 20px;
  padding-left: 7px;
  color: #fff;
  border-top: 1px solid #8c8f94;
`;
const StartTab = styled.div`
  width: 64px;
  margin-bottom: 1px;
`;
const ActiveTab = styled.div`
  display: flex;
  align-items: center;
  gap: 8px;
  width: 186px;
  height: 18px;
  padding-left: 2px;
  color: #000;
  border-radius: 3px 5px 0 0;
  background: linear-gradient(#fff, #dfe2e8);
`;
const TabArrows = styled.svg`
  width: 28px;
  height: 18px;
  margin: 0 6px 0 auto;
`;
const DocFrame = styled.div`
  display: flex;
  flex-direction: column;
  height: 763px;
  border: 4px solid #f0f0f0;
  border-top-width: 3px;
  border-bottom: 5px solid #ededed;
  border-right-color: #e9e9e9;
`;
const View = styled.div`
  flex: 1;
  display: flex;
  border-top: 3px solid #858585;
  border-left: 2px solid #858585;
  background: #efefef;
`;
const Canvas = styled.svg`
  display: block;
  width: 1518px;
  height: 715px;
  background: #5a5a5a;
`;
const VScroll = styled.div`
  flex: 1;
  padding: 577px 0 0 7px;
  border-left: 1px solid #fff;
`;
const HScroll = styled.div`
  height: 17px;
  border-top: 1px solid #fff;
  background: #efefef;
  padding: 5px 0 0 776px;
`;
const Thumb = styled.div<{ $w: number; $h: number }>`
  width: ${p => p.$w}px;
  height: ${p => p.$h}px;
  background: #8a8a8a;
`;
const SheetBar = styled.div`
  display: flex;
  align-items: center;
  height: 18px;
  padding-left: 1px;
  background: linear-gradient(#484848, #6c6c6c 25%, #7b7b7b);
`;
const NavBtn = styled.div`
  width: 14px;
  height: 14px;
  margin: -2px 2.200px 0 0;
  background: linear-gradient(#f4f4f4, #cfcfcf);
`;
const SheetTab = styled.div<{ $w: number; $on?: boolean }>`
  width: ${p => p.$w}px;
  height: 17px;
  padding-left: 7px;
  margin-left: ${p => (p.$on ? 3 : -10)}px;
  align-self: flex-start;
  clip-path: polygon(${p => (p.$on ? '0 0, 100% 0, calc(100% - 15px) 100%, 0 100%' : '10px 0, 100% 0, calc(100% - 15px) 100%, 0 100%, 0 12px')});
  background: ${p => (p.$on ? 'linear-gradient(#fff, #e6e9ee)' : 'linear-gradient(#e0e3e8, #b6bac2)')};
`;

const HexNum = ({ x, y, n }: { x: number; y: number; n: string }) => (
  <g>
    <path d={`M${x - 54.5} ${y}L${x - 27.5} ${y - 54.5}H${x + 27.5}L${x + 54.5} ${y}L${x + 27.5} ${y + 54.5}H${x - 27.5}z`} fill="#ff0" stroke="#000" strokeWidth="1.800" />
    <text x={x} y={y + 15.5} textAnchor="middle" fontFamily="Liberation Sans, Arial, sans-serif" fontWeight="700" fontSize="45" stroke="#000" strokeWidth=".7" textLength={n.length * 24} lengthAdjust="spacingAndGlyphs">{n}</text>
  </g>
);
const Dim = ({ x, y, w, s }: { x: number; y: number; w: number; s: string }) => (
  <text x={x} y={y} fill="#6868fa" stroke="#6868fa" strokeWidth=".5" fontSize="14.500" fontFamily="Liberation Sans, Arial, sans-serif" textLength={w} lengthAdjust="spacingAndGlyphs">{s}</text>
);
const FlangeV = ({ x, y, h, w = 7, c = 'url(#oV)', e = '#ff9500' }: { x: number; y: number; h: number; w?: number; c?: string; e?: string }) => (
  <g><rect x={x} y={y} width={w} height={h} rx="2.500" fill={e} /><rect x={x} y={y + 3} width={w} height={h - 6} fill={c} /><path d={`M${x + w - 0.5} ${y + 3}v${h - 6}`} stroke="#7a4300" /></g>
);
const FlangeH = ({ x, y, w, h = 6.5, c = 'url(#oH)', e = '#ff9500' }: { x: number; y: number; w: number; h?: number; c?: string; e?: string }) => (
  <g><rect x={x} y={y} width={w} height={h} rx="3" fill={e} /><rect x={x + 4} y={y} width={w - 8} height={h} fill={c} /><path d={`M${x + 4} ${y + h - 0.5}h${w - 8}`} stroke="#8a4c00" /></g>
);

function Drawing() {
  const grad = (id: string, v: boolean, a: string, m: string, b: string) => (
    <linearGradient id={id} x1="0" y1="0" x2={v ? 0 : 1} y2={v ? 1 : 0}>
      <stop offset="0" stopColor={a} /><stop offset=".45" stopColor={m} /><stop offset="1" stopColor={b} />
    </linearGradient>
  );
  return (
    <Canvas viewBox="330 210 1518 715">
      <defs>
        {grad('gV', true, '#333', '#4b4b4b', '#303030')}
        {grad('gH', false, '#333', '#4b4b4b', '#303030')}
        {grad('oV', true, '#e88400', '#ff9600', '#b86400')}
        {grad('oH', false, '#d97800', '#ff9600', '#b86400')}
        {grad('grH', false, '#004a00', '#3cc03c', '#004f00')}
        {grad('grV', true, '#004a00', '#3cc03c', '#004f00')}
        {grad('rH', false, '#a00', '#ff4848', '#a00')}
        {grad('wV', true, '#c0c0c0', '#fff', '#9c9c9c')}
        {grad('yH', false, '#9bbf50', '#f2ffc0', '#a9cf60')}
        {grad('bowl', false, '#900', '#f00', '#900')}
      </defs>
      <g fill="#000">
        <path d="M886 210h15.500v117l-.5 338h-16.500l.5-368z" />
        <path d="M892 657h333v17H892zM1209 210h16v464h-16z" />
      </g>
      <path d="M892 380v277" stroke="#666" strokeWidth="2" strokeDasharray="31 20 42 20" />
      <text x="574" y="369.500" fontFamily="Liberation Sans, Arial, sans-serif" fontWeight="700" fontSize="45.500" stroke="#000" strokeWidth=".5" textLength="852" lengthAdjust="spacingAndGlyphs">Ordinary Group II•0.20 gpm/ft² for 117 ft²</text>
      <rect x="655" y="355.500" width="905" height="28" fill="#5a5a5a" />
      <path d="M885 355h16v28h-16zM1209 355h16v28h-16z" />
      <path d="M652.500 375V665M652.500 665H880" stroke="#707070" strokeDasharray="41 21" fill="none" />
      <path d="M655 355.500h230" stroke="#6f6f6f" strokeDasharray="30 16" />
      <g stroke="#000" strokeWidth="1.700" fill="none">
        <path d="M1124 210l21 12M1063 379l81 51M1051 375L1145 538M1051 507L1145 649M1051 573L1145 758M961 600L1045 925" />
        <path d="M692 577L782 735M703 574L782 626" strokeWidth="1.900" />
      </g>
      <g fill="#7a2b2b"><path d="M961 299h173v7H961zM961 307.500h173v6H961z" /></g>
      <circle cx="1131" cy="567" r="13.500" fill="none" stroke="#000" strokeWidth="1.500" />
      <circle cx="1131" cy="567" r="9" fill="none" stroke="#000" strokeWidth="2" />

      <HexNum x={1172} y={277} n="12" />
      <HexNum x={1172} y={485} n="19" />
      <HexNum x={1172} y={594} n="20" />
      <HexNum x={1172} y={703} n="24" />
      <HexNum x={1172} y={812} n="34" />
      <HexNum x={1172} y={921.5} n="101" />
      <HexNum x={809} y={680.5} n="1" />
      <HexNum x={809} y={790} n="6" />

      <path d="M1054 210L1146 867M1109 590L1145 649" stroke="#000" strokeWidth="1.500" />
      <path d="M774 665h29M830 665h26" stroke="#8a8a40" />

      <rect x="709" y="357" width="850" height="21.500" fill="url(#gV)" />
      <path d="M1044 210h7v353h-7z" fill="#f00" />
      <path d="M1032 232L1055 204M1032 451L1064 418.500" stroke="#000" strokeWidth="2" />
      <g fill="#444" stroke="#2c2c2c">
        <path d="M1044 263h7v14h-7zM1044 334h7v13h-7zM1044 361h7v14h-7zM1044 496h7v11h-7z" />
        <path d="M1043 266h9M1043 274h9M1043 337h9M1043 344h9M1043 498h9" strokeWidth="1.500" />
      </g>
      <g fill="none" strokeDasharray="4 2">
        <circle cx="1047.500" cy="270" r="8.500" stroke="#924040" />
        <circle cx="1047.500" cy="340" r="8.500" stroke="#924040" />
        <circle cx="1047.500" cy="367.500" r="9" stroke="#77775a" />
      </g>

      <FlangeV x={1525} y={352} h={32} />
      <FlangeV x={1553} y={352} h={32} />

      <rect x="673" y="390" width="23" height="155" fill="url(#gH)" />
      <rect x="660" y="357" width="48" height="22" fill="url(#oV)" />
      <path d="M673 388v-10l11.500-9 11.500 9v10z" fill="url(#oH)" />
      <FlangeV x={659} y={352} h={33} />
      <FlangeV x={704} y={352} h={33} />
      <FlangeH x={667.5} y={387} w={34.5} />

      <circle cx="684" cy="563" r="26" fill="none" stroke="#9a9a9a" strokeDasharray="5 3" />
      <ellipse cx="684" cy="565" rx="18.500" ry="18.500" fill="#0a0a90" />
      <path d="M663 552h7v24h-7z" fill="#ffe268" />
      <path d="M657 562h10v3h-10z" fill="#e0b060" />
      <path d="M661 549h9M665 546v6" stroke="#e00" strokeWidth="1.500" />
      <rect x="667" y="557" width="34" height="12" fill="#e58600" />
      <circle cx="684" cy="563" r="15" fill="#f08c00" />
      <path d="M673.500 546h22v18q0 10-11 10.500t-11-10.500z" fill="url(#oH)" />
      <FlangeH x={667.5} y={541} w={34.5} />

      <rect x="702" y="556" width="22" height="15" fill="url(#grV)" />
      <FlangeV x={707.5} y={551} h={25} w={6} e="#ffe268" />
      <rect x="722" y="574" width="8" height="58" fill="url(#rH)" />
      <path d="M723 632h7v5l-2 7h-4l1-6z" fill="#888" stroke="#333" strokeWidth=".8" />
      <rect x="729" y="557" width="22" height="13" fill="#e08200" />
      <path d="M729 563l10-5v12z" fill="#ffab30" />
      <rect x="740" y="558" width="9" height="12" fill="#ffe268" />
      <path d="M735 554h12M735 573h12" stroke="#e08200" strokeWidth="2" />
      <FlangeV x={722.5} y={550} h={27} w={7} e="#ffe268" />
      <circle cx="772" cy="563" r="11.500" fill="#f59a10" />
      <rect x="780" y="559" width="5" height="8" fill="#ffc040" />
      <path d="M764 560h14v18h-14z" fill="#e8e8e8" />
      <path d="M757 557h15q7 1 7 7t-7 6.500h-15z" fill="url(#wV)" />
      <FlangeV x={751} y={550} h={27} w={6} e="#ffe268" />
      <rect x="764" y="584" width="15" height="51" fill="url(#grH)" />
      <FlangeH x={758} y={577.5} w={27} e="#ffe268" />
      <path d="M764 637h15v9l-4 6h-7l-4-6z" fill="url(#yH)" />
      <rect x="762" y="634" width="18.500" height="4" fill="url(#yH)" />
      <path d="M760 650l5-3 4 5-5 5zM773 652l5-5 4 3-3 6z" fill="#b9e070" />

      <path d="M683 579h2.500v14h-2.500z" fill="#d00" />
      <path d="M669 593h31q-1 15-15.500 15t-15.500-15z" fill="url(#bowl)" />
      <path d="M692 577L782 735" stroke="#000" strokeWidth="1.900" />

      <circle cx="961" cy="600" r="13.500" fill="none" stroke="#000" strokeWidth="1.600" />
      <circle cx="961" cy="600" r="9" fill="#000" />
      <path d="M962 600L971 575Q985 540 994 508T999 484Q997 470 991 473T994 484Q1020 502 1044 502" fill="none" stroke="#333" strokeWidth="3" />
      <path d="M962 600L971 575Q985 540 994 508T999 484" fill="none" stroke="#f5f5f5" strokeWidth="2.200" />
      <path d="M999 484Q997 470 991 473T994 484Q1020 502 1044 502" fill="none" stroke="#a0a0a0" strokeWidth="1.800" />

      <Dim x={972.5} y={523} w={50} s="22.167" />
      <Dim x={1091} y={511} w={40} s="0.846" />
      <Dim x={1091} y={523.5} w={67} s="0.211435" />
      <Dim x={1156} y={523} w={49} s="21.321" />
      <Dim x={1091} y={537} w={40} s="25.00" />
      <path d="M1059 525.500h40" stroke="#6464ff" strokeWidth="3" />
      <path d="M1097 520.500l20 5-20 5z" fill="#6464ff" />
      <path d="M1052 567.500h75" stroke="#6464ff" strokeWidth="3" />
      <rect x="1042" y="562" width="12" height="11.500" fill="#989098" />
      <rect x="1124" y="562" width="12" height="11.500" fill="#a8a090" fillOpacity=".9" />
    </Canvas>
  );
}

const NAV = ['M4 3v8M10 3v8l-4-4z', 'M9 3v8l-4-4z', 'M5 3v8l4-4z', 'M10 3v8M4 3v8l4-4z'];
function Document() {
  return (
    <Doc>
      <DocTabs>
        <StartTab><Fit w={52}>Start Page</Fit></StartTab>
        <ActiveTab>
          <Fit w={160} bold>Simple Threaded System22.cad</Fit>
          <svg width="8" height="8" viewBox="0 0 8 8"><path d="M.5.5l7 7M7.500.5l-7 7" stroke="#333" strokeWidth="1.300" /></svg>
        </ActiveTab>
        <TabArrows viewBox="0 0 28 18" fill="none" stroke="#6c6c6c"><path d="M6 5v8l-4-4zM20 5v8l4-4z" /></TabArrows>
      </DocTabs>
      <DocFrame>
        <View><Drawing /><VScroll><Thumb $w={2} $h={17} /></VScroll></View>
        <HScroll><Thumb $w={17} $h={2} /></HScroll>
        <SheetBar>
          {NAV.map(d => (
            <NavBtn key={d}><svg width="14" height="14"><path d={d} fill="#333" stroke="#333" /></svg></NavBtn>
          ))}
          <SheetTab $w={62} $on><Fit w={39} bold>*Model</Fit></SheetTab>
          <SheetTab $w={58}><Fit w={38}>Sheet 1</Fit></SheetTab>
        </SheetBar>
      </DocFrame>
    </Doc>
  );
}

/* ---------- status line ---------- */
const Status = styled.div`
  display: flex;
  align-items: center;
  height: 19px;
  padding: 3px 0 0 4px;
  color: #fff;
  background: linear-gradient(#3d4049 0 8px, #2c2c2c 8px);
`;
const Pane = styled.div<{ $w: number }>`
  flex: none;
  width: ${p => p.$w}px;
  padding-left: 3px;
  border-left: 1px solid #707070;
`;
const Spacer = styled.div`
  flex: 1;
`;

/* ---------- right toolbars ---------- */
const Rail = styled.div`
  display: flex;
  flex-direction: column;
  width: 46px;
`;
const RailBar = styled.div<{ $h: number }>`
  display: flex;
  flex-direction: column;
  align-items: center;
  height: ${p => p.$h}px;
  background: linear-gradient(90deg, #c9ccd2, #c6c9cf 35%, #a9aeb7 65%, #8f96a1);
`;
const RailGrip = styled.div`
  width: 31px;
  height: 2px;
  margin: 4px 0 0;
  flex: none;
  background: repeating-linear-gradient(90deg, #4d5158 0 2px, #eceef0 2px 3px, transparent 3px 4px);
`;
const RailCap = styled.div`
  display: flex;
  align-items: center;
  justify-content: flex-end;
  width: 100%;
  height: 22px;
  margin-top: auto;
  padding: 2px 3px 0 0;
  background: linear-gradient(90deg, #4f5763, #7d838e 45%, #a3a8b2);
`;
const RailSlot = styled.div<{ $mt: number }>`
  flex: none;
  margin-top: ${p => p.$mt}px;
`;
const RailLine = styled.div<{ $mt: number }>`
  flex: none;
  width: 28px;
  height: 2px;
  margin-top: ${p => p.$mt}px;
  background: linear-gradient(#70757e 50%, #f2f2f2 50%);
`;
const RailHot = styled.div`
  flex: none;
  display: flex;
  justify-content: center;
  align-items: center;
  width: 43px;
  height: 64px;
  margin-top: 2px;
  border: 1px solid #8d8f88;
  background: ${hot};
`;
const RailEnd = () => (
  <RailCap>
    <svg width="14" height="12" viewBox="0 0 14 12" shapeRendering="crispEdges">
      <path d="M2 1v10" stroke="#fff" strokeWidth="2" /><path d="M6 1v9l6-5z" fill="#555" /><path d="M7 11l6-5" stroke="#fff" strokeWidth="1.500" />
    </svg>
  </RailCap>
);

/* ---------- tooltip ---------- */
const Tip = styled.div`
  position: absolute;
  left: 1080px;
  top: 956px;
  display: flex;
  gap: 6px;
  width: 232px;
  height: 54px;
  padding: 2px 0 0 5px;
  color: #4c4c4c;
  border: 1px solid #767676;
  background: linear-gradient(#fff, #e4e5f0);
  box-shadow: 2px 2px 2px rgba(0, 0, 0, 0.35);
`;
const TipText = styled.div`
  display: flex;
  flex-direction: column;
  margin-top: -1px;
`;
const TipBody = styled.div`
  margin-top: 4px;
  & > span { line-height: 13px; }
`;

const MENUS: [string, number][] = [
  ['File', 17.5], ['Edit', 20], ['Select', 30], ['Snaps', 30.6], ['Tools', 26], ['Actions', 37.6], ['Commands', 56.4], ['Auto Draw', 55],
  ['Roof Planes', 61], ['Wizards', 40.4], ['Hydraulics', 52.6], ['Finish', 30.4], ['Alerts', 28.6], ['Listing', 34], ['Parts Database', 75.7],
  ['AutoPREP', 50.4], ['Settings', 41.4], ['View', 24.8], ['Window', 43.7], ['Help', 23.4],
];

const BARS = {
  file: [...ic('doc', 'open', 'save', 'gear', 'wrench', 'lock', 'gearGo', 'gearBack'), tx('Load Toolbar State', 96), tx('Save Toolbar State', 94)],
  wizards: [
    ...ic('digger', 'wand1', 'wand2', 'wand3', 'wand4', 'pipeDrop', 'orbit'), tx('Remote Area Table', 95, true), ...ic('table', 'plusMinus'),
    tx('Analysis Reports...', 93), ...ic('most'), tx('Keep Hydraulically Most Demanding Area', 210.5), tx('Riser Tag', 45.5),
    ...ic('tagNew', 'tagRe'), tx('Renumber...', 61.5), ...ic('cleanup'), tx('Cleanup', 42.5),
  ],
  parts: [
    tx('Pipe Outlet', 58), ...ic('outlet', 'wye', 'bushing', 'cap', 'coupling', 'cross', 'elbow', 'flange', 'hose'), tx('Mechanical Cross', 89),
    tx('Mechanical Tee', 77.5), ...ic('reducer'), tx('Saddle', 35), tx('Seismic Flex', 60),
    ...ic('tee', 'union', 'valveR', 'nipple', 'alarm', 'upright', 'pendent', 'sidewall', 'ball'), tx('Hydraulic Wormhole', 105), ...ic('hydrant'),
    tx('Strainer', 40.5), ...ic('meter', 'tri', 'hanger', 'target'), tx('Hanger Assembly...', 96.5), ...ic('hangerH', 'triH'), tx('Parts Profile...', 70),
  ],
  detail: [tx('Create Detail...', 75), ...ic('detail', 'dashTri'), tx('Hide Layers', 57), tx('Isolate Layers', 67.5), tx('Unisolate Layers', 82.5, true), tx('Interference Checking...', 121.5)],
  calc: [tx('Hydraulic Calculations...', 122), ...ic('graph', 'book', 'sheet', 'lasso', 'dashDoc', 'box', 'plan', 'scroll', 'printG', 'docHand', 'print', 'bldg', 'frame')],
  elev: [...ic('elevate'), tx('Elevate to Pipes', 79.5), tx('Elevate Beams...', 78.5), ...ic('palette', 'tagY', 'tagA')],
  legend: [...ic('beam', 'star'), tx('Sprinkler Legend', 86.5)],
  panels: [
    ...ic('win'), bt('Layers', 38.5, 30), bt('Parts Picker', 65.5, 57), bt('Alerts', 36.5, 29), bt('Select', 37.8, 30), bt('Symbols', 50, 41),
    ...ic('left'), tx('-Y', 8), ...ic('up'), tx('+X', 13), ...ic('right'), tx('+Y', 12), ...ic('down'), tx('-X', 9),
  ],
  step: [...ic('go'), { k: 'field' } as Item],
  camera: [
    ...ic('undo', 'pick', 'checks', 'burst', 'lockT'), tx('Lock On Target', 77), ...ic('zoomIn'), { k: 'on', n: 'zoomOut', hover: true } as Item,
    ...ic('pUp', 'pLeft', 'pCurl', 'pDown', 'pRight', 'pRedo', 'rotL', 'rotR', 'h1', 'h2', 'h3', 'h4', 'expand', 'plane'),
    { k: 'on', n: 'floor' } as Item, tx('Refresh Elements', 87),
  ],
};

export default function App() {
  return (
    <Window>
      <GlobalStyle />
      <TitleBar>
        <svg width="15" height="16" viewBox="0 0 15 16"><rect width="15" height="16" fill="#333c4c" /><path d="M3 13L8 3l2 10M5 9h6" stroke="#8db8ef" strokeWidth="2.400" fill="none" /><path d="M11 5q4 5-3 9" stroke="#d9dde4" strokeWidth="2" fill="none" /></svg>
        <Caption><Fit w={903} size={12}>AutoSPRINK® 2023 Platinum - C:\Users\B.Chambers\Desktop\AutomationTesting\SmokeTesting\SPRINK Smoke Testing Files\Billy Test Files\Simple Threaded System22.cad</Fit></Caption>
        <WinButtons viewBox="0 0 130 23" fill="none" stroke="#111" strokeWidth="1.100">
          <path d="M8.500 10.500h10M54.500 7.500h7v7h-7zM56.500 5.500h5q2 0 2 2v5M100 5l10 10M110 5l-10 10" />
        </WinButtons>
      </TitleBar>
      <MenuBar>
        <MenuIcon viewBox="0 0 16 16" shapeRendering="crispEdges"><path d="M0 2h12l3 3v11H0z" fill="#fff" stroke="#111" /><path d="M1 1h10v4H1z" fill="#dd0" /><path d="M1 7h5l4 8H1z" fill="#0b0" /><path d="M4 8h7l-4 5z" fill="#fff" /><path d="M11 8h2v5h-2z" fill="#d0c" /></MenuIcon>
        {MENUS.map(([s, w]) => <Fit key={s} w={w}>{s}</Fit>)}
        <MdiButtons viewBox="0 0 50 20" fill="none" stroke="#9299a4" strokeWidth="1.400"><path d="M5 14h7M20 9.500h6v5h-6zM22 9V7h6v5h-2M37 6.500l6 8M43 6.500l-6 8" /></MdiButtons>
      </MenuBar>
      <ToolRow><Toolbar items={BARS.file} w={594} /><Toolbar items={BARS.wizards} w={1209} /></ToolRow>
      <ToolRow><Toolbar items={BARS.parts} w={1890} shadow /></ToolRow>
      <ToolRow>
        <Toolbar items={BARS.detail} w={571} /><Toolbar items={BARS.calc} w={735} /><Toolbar items={BARS.elev} w={385} shadow /><Toolbar items={BARS.legend} w={216} shadow />
      </ToolRow>
      <Middle>
        <Work>
          <WorkTop><LayersPanel /><Document /></WorkTop>
          <Status>
            <Fit w={261}>Decreases the camera magnification of the camera.</Fit>
            <Spacer />
            <Pane $w={57}><Fit w={51}>1 selected</Fit></Pane>
            <Pane $w={81}><Fit w={75}>Elev1: 3'-3  S: 0</Fit></Pane>
            <Pane $w={111}><Fit w={105}>Length: 2'-0 (1'-10½)</Fit></Pane>
            <Pane $w={64}><Fit w={58}>ø 1 (1.0490)</Fit></Pane>
            <Pane $w={11}><Fit w={6}>T</Fit></Pane>
            <Pane $w={34}><Fit w={28}># Off</Fit></Pane>
            <Pane $w={30}><Fit w={24}>Foot</Fit></Pane>
          </Status>
        </Work>
        <Rail>
          <RailBar $h={234}>
            <RailGrip />
            <RailSlot $mt={10}><Fit w={66} size={12.2} vertical>Import DWG</Fit></RailSlot>
            <RailSlot $mt={7}><Icon name="dwg" /></RailSlot>
            <RailSlot $mt={11}><Icon name="docs" shadow /></RailSlot>
            <RailSlot $mt={9}><Icon name="cubes" /></RailSlot>
            <RailEnd />
          </RailBar>
          <RailBar $h={341}>
            <RailGrip />
            <RailSlot $mt={8}><Icon name="v1" /></RailSlot>
            <RailSlot $mt={9}><Icon name="v2" /></RailSlot>
            <RailLine $mt={9} />
            <RailSlot $mt={8}><Icon name="v3" shadow /></RailSlot>
            <RailSlot $mt={11}><Icon name="v4" shadow /></RailSlot>
            <RailLine $mt={8} />
            <RailSlot $mt={7}><Icon name="v5" shadow /></RailSlot>
            <RailSlot $mt={9}><Icon name="v6" /></RailSlot>
            <RailSlot $mt={12}><Icon name="v7" shadow /></RailSlot>
            <RailEnd />
          </RailBar>
          <RailBar $h={220}>
            <RailGrip />
            <RailSlot $mt={11}><Fit w={30} size={12.2} vertical>GLSL</Fit></RailSlot>
            <RailHot><Fit w={55} size={12.2} vertical>OpenGL®</Fit></RailHot>
            <RailSlot $mt={5}><Icon name="scrBack" shadow /></RailSlot>
            <RailSlot $mt={10}><Icon name="scrGo" shadow /></RailSlot>
            <RailEnd />
          </RailBar>
        </Rail>
      </Middle>
      <ToolRow>
        <Toolbar items={BARS.panels} w={557} shadow lead={10.5} /><Toolbar items={BARS.step} w={141} lead={8} /><Toolbar items={BARS.camera} w={1183} shadow lead={11} />
      </ToolRow>
      <Tip>
        <Icon name="zoomOut" size={16} />
        <TipText>
          <Fit w={165} bold>Zoom Camera Out (Page down)</Fit>
          <TipBody>
            <Fit w={198}>Decreases the camera magnification of</Fit>
            <Fit w={59}>the camera.</Fit>
          </TipBody>
        </TipText>
      </Tip>
    </Window>
  );
}
